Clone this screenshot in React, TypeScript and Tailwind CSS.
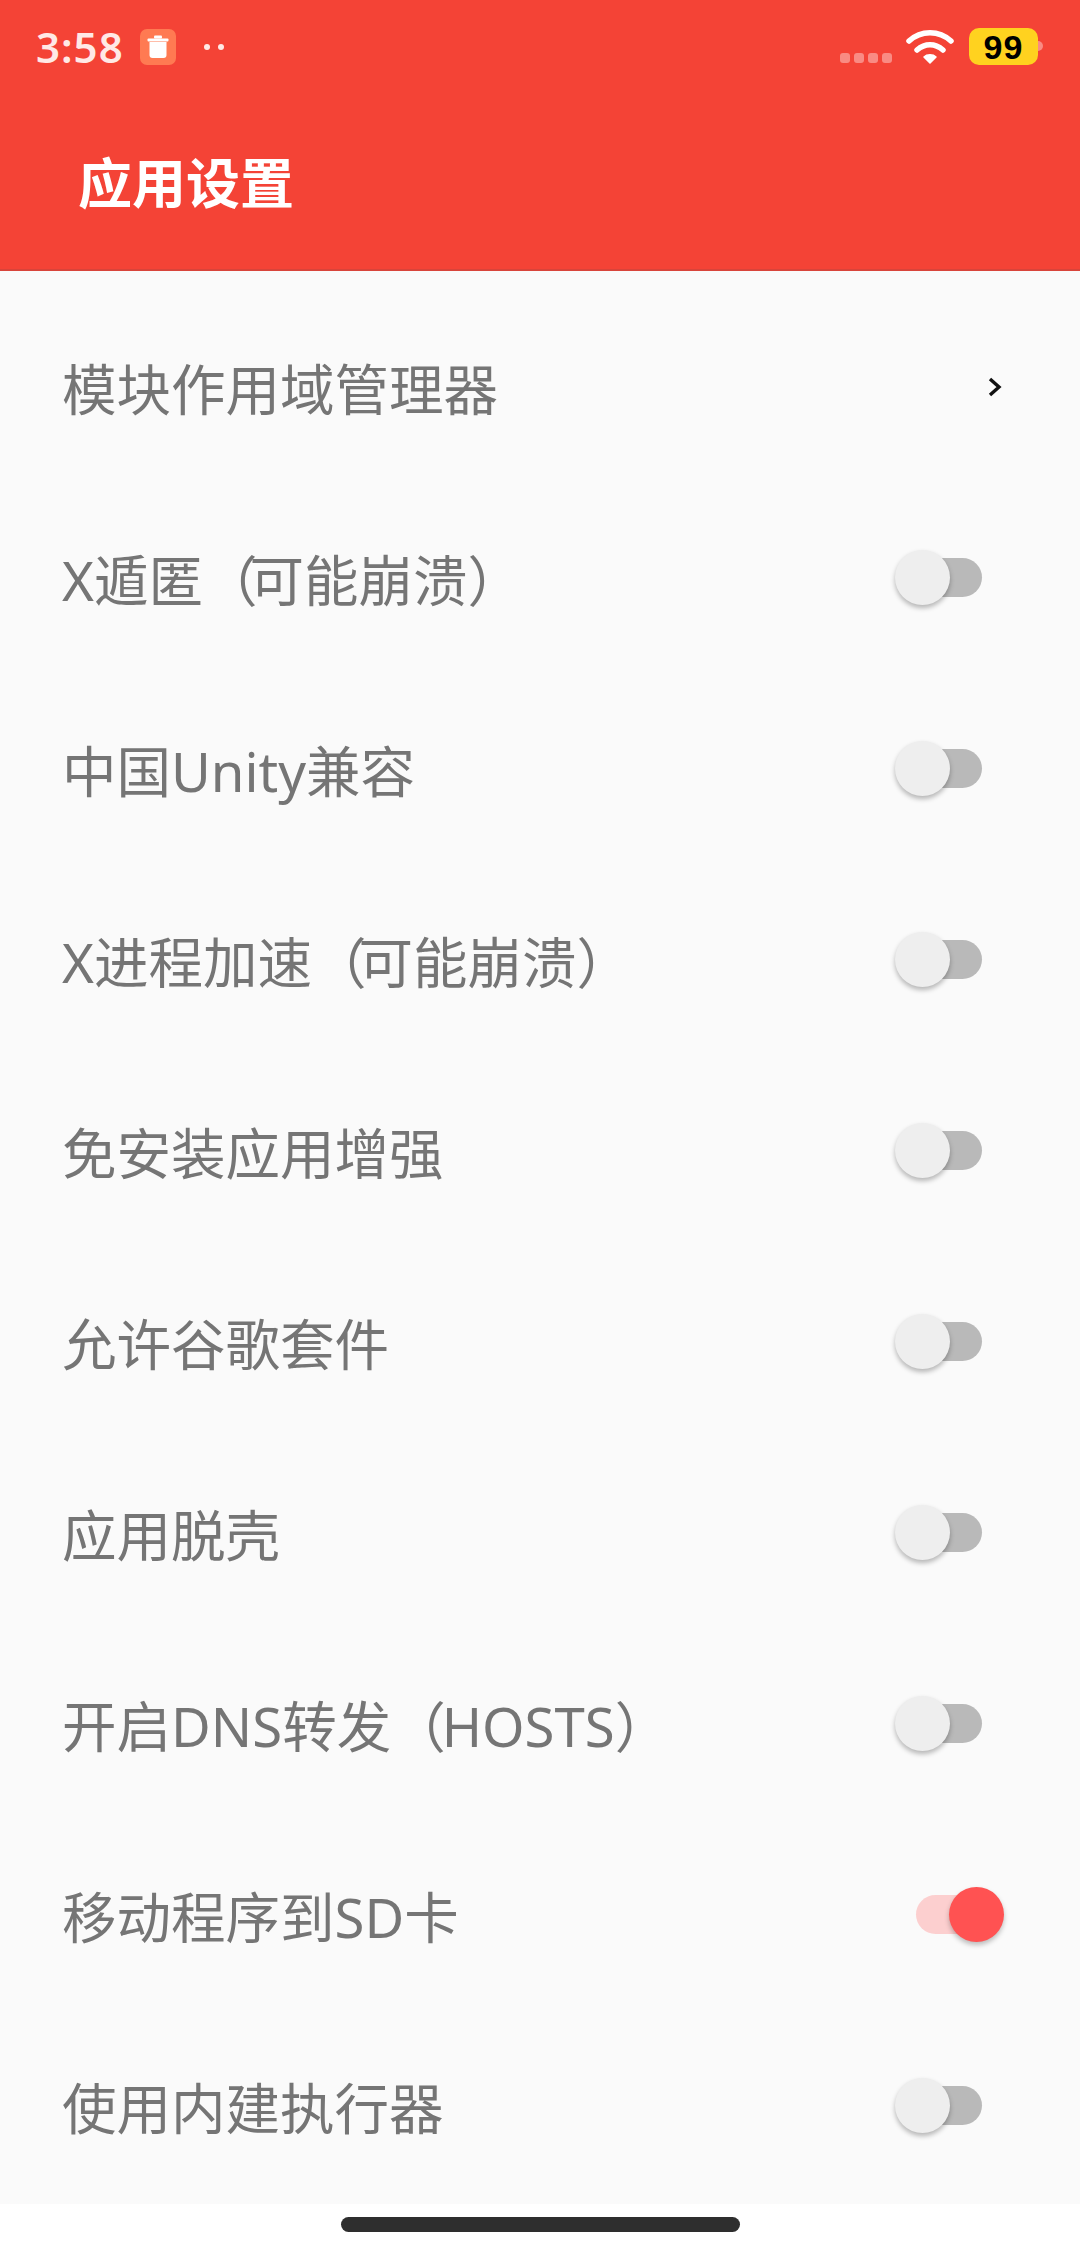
const font = { fontFamily: '"Noto Sans", "Noto Sans CJK SC", sans-serif' };

type Kind = "chevron" | "off" | "on";

const rows: { label: string; paren?: string; rest?: string; tight?: boolean; kind: Kind }[] = [
  { label: "模块作用域管理器", kind: "chevron" },
  { label: "X遁匿", paren: "（", rest: "可能崩溃）", tight: true, kind: "off" },
  { label: "中国Unity兼容", kind: "off" },
  { label: "X进程加速", paren: "（", rest: "可能崩溃）", tight: true, kind: "off" },
  { label: "免安装应用增强", kind: "off" },
  { label: "允许谷歌套件", kind: "off" },
  { label: "应用脱壳", kind: "off" },
  { label: "开启DNS转发", paren: "（", rest: "HOSTS）", kind: "off" },
  { label: "移动程序到SD卡", kind: "on" },
  { label: "使用内建执行器", kind: "off" },
];

function Toggle({ on }: { on: boolean }) {
  return (
    <div className="relative h-[39px] w-[87px] shrink-0">
      <div className={on ? "absolute left-0 top-0 h-[39px] w-[66px] rounded-full bg-[#fccfcf]" : "absolute left-0 top-0 h-[39px] w-[66px] rounded-full bg-[#b9b9b9]"} />
      {on ? (
        <div className="absolute left-[33px] top-[-8px] h-[55px] w-[55px] rounded-full bg-[#ff5252] shadow-[0_3px_5px_rgba(0,0,0,0.25)]" />
      ) : (
        <div className="absolute left-[-21px] top-[-8px] h-[55px] w-[55px] rounded-full bg-[#eeeeee] shadow-[0_3px_5px_rgba(0,0,0,0.28)]" />
      )}
    </div>
  );
}

function Row({ label, paren, rest, tight, kind }: { label: string; paren?: string; rest?: string; tight?: boolean; kind: Kind }) {
  return (
    <div className="flex h-[191px] items-center justify-between pl-[62px]">
      <span className="pt-[6px] text-[54.5px] leading-none text-[#757575]" style={font}>
        {label}
        {paren ? <span className={tight ? "tracking-[-8px]" : "tracking-[-4px]"}>{paren}</span> : null}
        {rest}
      </span>
      {kind === "chevron" ? (
        <svg width="16" height="20" viewBox="0 0 16 20" className="mr-[77px]">
          <path d="M3 2 L12 10 L3 18" fill="none" stroke="#111" strokeWidth="3.4" />
        </svg>
      ) : (
        <div className="mr-[77px]"><Toggle on={kind === "on"} /></div>
      )}
    </div>
  );
}

export default function App() {
  return (
    <div className="flex h-[2248px] w-[1080px] flex-col overflow-hidden bg-white" style={font}>
      <header className="h-[271px] shrink-0 border-b-2 border-[#d8443a] bg-[#f44336]">
        <div className="flex h-[94px] items-start">
          <span className="ml-[36px] mt-[23px] w-[88px] text-[42px] font-semibold leading-[48px] tracking-[1px] text-[#ffe9e6]">3:58</span>
          <div className="ml-[16px] mt-[29px] flex h-[36px] w-[36px] items-center justify-center rounded-[7px] bg-[#ff7a52]">
            <svg width="22" height="24" viewBox="0 0 22 24">
              <rect x="7" y="0.5" width="8" height="3" rx="1" fill="#fff" />
              <rect x="0.5" y="3.5" width="21" height="3" rx="1" fill="#fff" />
              <path d="M2.5 7 H19.5 V20 Q19.5 23 16.5 23 H5.5 Q2.5 23 2.5 20 Z" fill="#fff" />
            </svg>
          </div>
          <div className="ml-[28px] mt-[44px] flex gap-[8px]">
            <div className="h-[6px] w-[6px] rounded-full bg-[#ffe9e6]" />
            <div className="h-[6px] w-[6px] rounded-full bg-[#ffe9e6]" />
          </div>
          <div className="ml-auto mt-[53px] flex gap-[4px]">
            <div className="h-[10px] w-[10px] rounded-[3px] bg-[#f98b83]" />
            <div className="h-[10px] w-[10px] rounded-[3px] bg-[#f98b83]" />
            <div className="h-[10px] w-[10px] rounded-[3px] bg-[#f98b83]" />
            <div className="h-[10px] w-[10px] rounded-[3px] bg-[#f98b83]" />
          </div>
          <svg width="48" height="36" viewBox="0 0 48 36" className="ml-[14px] mt-[28px]">
            <path d="M3 13 C15 2 33 2 45 13" fill="none" stroke="#fff" strokeWidth="5.5" strokeLinecap="round" />
            <path d="M11 22 C19 15 29 15 37 22" fill="none" stroke="#fff" strokeWidth="5.5" strokeLinecap="round" />
            <path d="M18 29 C21 26 27 26 30 29 L24 35 Z" fill="#fff" stroke="#fff" strokeWidth="1.5" strokeLinejoin="round" />
          </svg>
          <div className="ml-[15px] mt-[28px] flex h-[37px] w-[69px] items-center justify-center rounded-[10px] bg-[#ffd21f]">
            <span className="text-[34px] font-bold leading-none tracking-[1px] text-black" style={{ fontFamily: '"Liberation Sans", sans-serif' }}>99</span>
          </div>
          <div className="mr-[37px] mt-[41px] h-[10px] w-[5px] rounded-r-full bg-[#f98b83]" />
        </div>
        <div className="pl-[78px] pt-[53px] text-[54px] font-bold leading-[72px] text-white">应用设置</div>
      </header>
      <main className="h-[1933px] shrink-0 bg-[#fafafa] pt-[20px]">
        {rows.map((r) => (
          <Row key={r.label} {...r} />
        ))}
      </main>
      <div className="flex flex-1 justify-center pt-[13px]">
        <div className="h-[15px] w-[399px] rounded-full bg-[#2e2e2e]" />
      </div>
    </div>
  );
}
